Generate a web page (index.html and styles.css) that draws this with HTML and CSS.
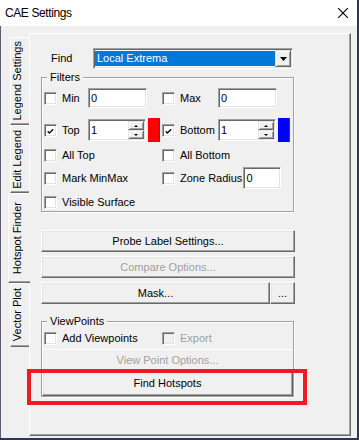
FILE: index.html
```html
<!DOCTYPE html>
<html lang="en">
<head>
  <meta charset="UTF-8">
  <title>CAE Settings</title>
  <link rel="stylesheet" href="styles.css">
</head>
<body>

<div class="window">
  <div class="titlebar">
    <span class="title">CAE Settings</span>
    <svg class="close" width="10" height="10" viewBox="0 0 10 10">
      <path d="M0 0L10 10M10 0L0 10" stroke="#000" stroke-width="1.1"/>
    </svg>
  </div>

  <div class="client">
    <div class="tabs">
      <div class="tab tab-legend"><span>Legend Settings</span></div>
      <div class="tab tab-edit"><span>Edit Legend</span></div>
      <div class="tab tab-hotspot active"><span>Hotspot Finder</span></div>
      <div class="tab tab-vector"><span>Vector Plot</span></div>
    </div>

    <div class="page">
      <div class="find-row">
        <span class="find-label">Find</span>
        <div class="combo">
          <div class="combo-value">Local Extrema</div>
          <div class="combo-btn">
            <svg width="7" height="4" viewBox="0 0 7 4"><path d="M0 0H7L3.5 4Z" fill="#000"/></svg>
          </div>
        </div>
      </div>

      <fieldset class="group filters">
        <legend>Filters</legend>

        <div class="row r1">
          <div class="cell cell-left">
            <span class="check"></span>
            <span class="lbl lbl-a">Min</span>
            <input class="text" type="text" value="0">
          </div>
          <div class="cell">
            <span class="check"></span>
            <span class="lbl lbl-b">Max</span>
            <input class="text" type="text" value="0">
          </div>
        </div>

        <div class="row r2">
          <div class="cell cell-left">
            <span class="check"><svg width="9" height="9" viewBox="0 0 9 9"><path d="M1 4.2L3 6.4L8 1.6" fill="none" stroke="#000" stroke-width="1.7"/></svg></span>
            <span class="lbl lbl-a">Top</span>
            <div class="spin">
              <input type="text" value="1">
              <div class="spin-btns">
                <span class="spin-btn"><i class="arrow-up"></i></span>
                <span class="spin-btn"><i class="arrow-down"></i></span>
              </div>
            </div>
            <span class="swatch red"></span>
          </div>
          <div class="cell">
            <span class="check"><svg width="9" height="9" viewBox="0 0 9 9"><path d="M1 4.2L3 6.4L8 1.6" fill="none" stroke="#000" stroke-width="1.7"/></svg></span>
            <span class="lbl lbl-b">Bottom</span>
            <div class="spin">
              <input type="text" value="1">
              <div class="spin-btns">
                <span class="spin-btn"><i class="arrow-up"></i></span>
                <span class="spin-btn"><i class="arrow-down"></i></span>
              </div>
            </div>
            <span class="swatch blue"></span>
          </div>
        </div>

        <div class="row r3">
          <div class="cell cell-left">
            <span class="check"></span>
            <span class="lbl">All Top</span>
          </div>
          <div class="cell">
            <span class="check"></span>
            <span class="lbl">All Bottom</span>
          </div>
        </div>

        <div class="row r4">
          <div class="cell cell-left">
            <span class="check"></span>
            <span class="lbl">Mark MinMax</span>
          </div>
          <div class="cell">
            <span class="check"></span>
            <span class="lbl">Zone Radius</span>
            <input class="text zone" type="text" value="0">
          </div>
        </div>

        <div class="row r5">
          <div class="cell cell-left">
            <span class="check"></span>
            <span class="lbl">Visible Surface</span>
          </div>
        </div>
      </fieldset>

      <button class="btn btn-probe">Probe Label Settings...</button>
      <button class="btn btn-compare" disabled>Compare Options...</button>
      <div class="mask-row">
        <button class="btn btn-mask">Mask...</button>
        <button class="btn btn-dots">...</button>
      </div>

      <fieldset class="group viewpoints">
        <legend>ViewPoints</legend>
        <div class="row r-vp">
          <div class="cell cell-left">
            <span class="check"></span>
            <span class="lbl">Add Viewpoints</span>
          </div>
          <div class="cell">
            <span class="check disabled"></span>
            <span class="lbl muted">Export</span>
          </div>
        </div>
        <button class="btn-flat" disabled>View Point Options...</button>
        <button class="btn btn-find">Find Hotspots</button>
      </fieldset>
    </div>
  </div>

  <div class="highlight"></div>
</div>

</body>
</html>
```

FILE: styles.css
```css
* {
  box-sizing: border-box;
}

body {
  margin: 0;
  background-color: #34344c;
  font-family: "Liberation Sans", Arial, sans-serif;
  font-size: 11px;
  line-height: 13px;
  color: #000;
}

.window {
  position: relative;
  width: 357px;
  height: 438px;
  background-color: #f0f0f0;
  display: flex;
  flex-direction: column;
}

.titlebar {
  height: 26px;
  flex-shrink: 0;
  background-color: #fff;
  display: flex;
  align-items: center;
  justify-content: space-between;
  padding: 0 9px 0 5px;
}

.title {
  font-size: 12px;
  letter-spacing: -0.4px;
}

.client {
  flex: 1;
  display: flex;
  padding: 7px 6px 2px 0;
  border-left: 1px solid #5c5c78;
}

/* vertical tabs on the left */
.tabs {
  width: 28px;
  flex-shrink: 0;
  display: flex;
  flex-direction: column;
  align-items: flex-end;
  padding-top: 4px;
}

.tab {
  width: 19px;
  display: flex;
  align-items: center;
  background-color: #f0f0f0;
  border-top: 1px solid #fff;
  border-left: 1px solid #fff;
  border-bottom: 1px solid #696969;
  box-shadow: inset 0 -1px 0 #a0a0a0;
}

.tab span {
  writing-mode: vertical-rl;
  transform: rotate(180deg);
  white-space: nowrap;
}

.tab-legend { height: 88px; }
.tab-edit { height: 68px; }
.tab-hotspot { height: 90px; }
.tab-vector { height: 64px; }

.tab.active {
  position: relative;
  z-index: 1;
  width: 22px;
  margin-right: -1px;
  padding-left: 2px;
}

.page {
  width: 322px;
  height: 403px;
  flex-shrink: 0;
  border-top: 1px solid #fff;
  border-left: 1px solid #fff;
  border-right: 1px solid #696969;
  border-bottom: 1px solid #696969;
  box-shadow: inset -1px -1px 0 #a0a0a0;
  padding: 14px 0 0 11px;
}

/* find combo */
.find-row {
  display: flex;
  align-items: center;
  height: 21px;
}

.find-label {
  width: 52px;
  padding-left: 10px;
}

.combo {
  width: 200px;
  height: 21px;
  display: flex;
  background-color: #fff;
  border: 1px solid;
  border-color: #a0a0a0 #fff #fff #a0a0a0;
  box-shadow: inset 1px 1px 0 #696969, inset -1px -1px 0 #e3e3e3;
  padding: 1px;
}

.combo-value {
  flex: 1;
  margin: 1px 0;
  padding-left: 2px;
  line-height: 15px;
  background-color: #0078d7;
  color: #fff;
}

.combo-btn {
  width: 16px;
  display: flex;
  align-items: center;
  justify-content: center;
  background-color: #f0f0f0;
  border: 1px solid;
  border-color: #e3e3e3 #696969 #696969 #e3e3e3;
  box-shadow: inset 1px 1px 0 #fff, inset -1px -1px 0 #a0a0a0;
}

/* group boxes */
.group {
  width: 253px;
  min-width: 0;
  margin: 0;
  padding: 0;
  border: 1px solid #a0a0a0;
  box-shadow: inset 1px 1px 0 #fff, 1px 1px 0 #fff;
}

.group legend {
  margin-left: 5px;
  padding: 0 3px;
  line-height: 13px;
  background-color: #f0f0f0;
}

.filters {
  margin-top: 2px;
  padding-bottom: 2px;
}

.row {
  display: flex;
  align-items: center;
  padding-left: 2px;
}

.r1 { margin-top: 4px; height: 20px; }
.r2 { margin-top: 10px; height: 24px; }
.r3 { margin-top: 7px; height: 13px; }
.r4 { margin-top: 5px; height: 22px; }
.r5 { margin-top: 7px; height: 13px; }
.r-vp { margin-top: 4px; height: 13px; }

.cell {
  display: flex;
  align-items: center;
}

.cell-left {
  width: 118px;
}

.lbl {
  white-space: nowrap;
}

.lbl-a { width: 26px; }
.lbl-b { width: 38px; }

.muted {
  color: #a0a0a0;
}

.check {
  width: 13px;
  height: 13px;
  margin-right: 5px;
  flex-shrink: 0;
  display: flex;
  padding: 2px;
  background-color: #fff;
  border: 1px solid;
  border-color: #a0a0a0 #fff #fff #a0a0a0;
  box-shadow: inset 1px 1px 0 #696969, inset -1px -1px 0 #e3e3e3;
}

.check.disabled {
  background-color: #f0f0f0;
}

/* text boxes */
.text,
.spin {
  height: 20px;
  background-color: #fff;
  border: 1px solid;
  border-color: #a0a0a0 #fff #fff #a0a0a0;
  box-shadow: inset 1px 1px 0 #696969, inset -1px -1px 0 #e3e3e3;
}

.text {
  width: 59px;
  padding: 0 2px;
  font: inherit;
  color: #000;
}

.text.zone {
  width: 38px;
  height: 22px;
  margin-left: 1px;
}

.spin {
  width: 58px;
  height: 22px;
  display: flex;
  padding: 1px;
}

.spin input {
  flex: 1;
  min-width: 0;
  border: none;
  background: transparent;
  padding: 0 1px;
  font: inherit;
  color: #000;
}

.spin-btns {
  width: 16px;
  display: flex;
  flex-direction: column;
}

.spin-btn {
  flex: 1;
  display: flex;
  align-items: center;
  justify-content: center;
  background-color: #f0f0f0;
  border: 1px solid;
  border-color: #e3e3e3 #696969 #696969 #e3e3e3;
  box-shadow: inset 1px 1px 0 #fff, inset -1px -1px 0 #a0a0a0;
}

.arrow-up,
.arrow-down {
  width: 0;
  height: 0;
  border-left: 2px solid transparent;
  border-right: 2px solid transparent;
}

.arrow-up { border-bottom: 2px solid #000; }
.arrow-down { border-top: 2px solid #000; }

.swatch {
  width: 12px;
  height: 24px;
  margin-left: 2px;
  border-right: 1px solid #404040;
}

.red { background-color: #ff0000; }
.blue { background-color: #0000ff; }

/* push buttons */
.btn {
  display: block;
  width: 254px;
  height: 22px;
  padding: 0;
  font: inherit;
  color: #000;
  background-color: #f0f0f0;
  border: 1px solid;
  border-color: #fff #696969 #696969 #fff;
  box-shadow: inset -1px -1px 0 #a0a0a0, inset 1px 1px 0 #e3e3e3;
}

.btn:disabled {
  color: #a0a0a0;
}

.btn-probe { margin-top: 18px; }
.btn-compare { margin-top: 4px; }

.mask-row {
  display: flex;
  margin-top: 4px;
}

.btn-mask { width: 229px; }
.btn-dots { width: 25px; }

.viewpoints {
  margin-top: 11px;
}

.btn-flat {
  display: block;
  width: 100%;
  height: 21px;
  margin-top: 4px;
  padding: 0;
  font: inherit;
  color: #a0a0a0;
  background: transparent;
  border: none;
  border-top: 1px solid #fff;
}

.btn-find {
  width: 100%;
  height: 26px;
}

/* red annotation box */
.highlight {
  position: absolute;
  left: 27px;
  top: 369px;
  width: 280px;
  height: 36px;
  border: 4px solid #ed1c24;
}
```
